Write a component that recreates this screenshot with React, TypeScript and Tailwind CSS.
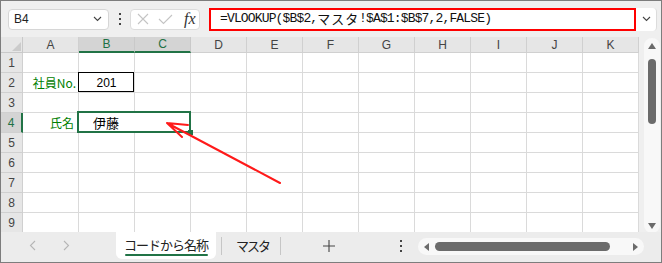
import React from 'react';

const COLS = ['A', 'B', 'C', 'D', 'E', 'F', 'G', 'H', 'I', 'J', 'K'];
const ROWS = [1, 2, 3, 4, 5, 6, 7, 8, 9];
const GREEN = '#217346';

const sans = { fontFamily: '"Liberation Sans", "Noto Sans CJK JP", sans-serif' };
const jp = { fontFamily: '"Noto Sans CJK JP", sans-serif' };

const Chevron = () => (
  <svg width="9" height="6" viewBox="0 0 9 6">
    <path d="M1 1L4.5 4.5L8 1" fill="none" stroke="#444" strokeWidth="1.1" />
  </svg>
);

const Dots = ({ color = '#444' }: { color?: string }) => (
  <div className="flex flex-col items-center gap-[3px]">
    {[0, 1, 2].map((i) => (
      <div key={i} className="w-[2px] h-[2px]" style={{ background: color }} />
    ))}
  </div>
);

// Cell contents keyed by "row-col"
const renderCell = (row: number, col: string) => {
  if (row === 2 && col === 'A')
    return (
      <div className="h-full flex items-center justify-end pr-[2px] text-[12px] text-[#008000]" style={jp}>
        社員No.
      </div>
    );
  if (row === 2 && col === 'B')
    return (
      <div className="relative h-full flex items-center justify-center text-[12px] text-black" style={sans}>
        201
        <div className="absolute -left-px -top-px right-0 bottom-0 border border-black" />
      </div>
    );
  if (row === 4 && col === 'A')
    return (
      <div className="h-full flex items-center justify-end pr-[4px] text-[12px] text-[#008000]" style={jp}>
        氏名
      </div>
    );
  return null;
};

export default function App() {
  return (
    <div
      className="relative w-[662px] h-[263px] border border-[#7d7d7d] bg-[#efefef] flex flex-col overflow-hidden"
      style={sans}
    >
      {/* formula bar */}
      <div className="h-[36px] shrink-0 flex items-center pl-[7px] pr-[4px]">
        <div className="w-[101px] h-[21px] bg-white border border-[#d6d6d6] rounded-[4px] flex items-center justify-between pl-[5px] pr-[6px]">
          <span className="text-[12px] text-[#222]">B4</span>
          <Chevron />
        </div>
        <div className="w-[21px] flex justify-center">
          <Dots />
        </div>
        <div className="w-[70px] h-[21px] bg-white border border-[#dcdcdc] rounded-[4px] flex items-center pl-[6px]">
          <svg width="12" height="12" viewBox="0 0 12 12">
            <path d="M1 1L11 11M11 1L1 11" stroke="#c4c4c4" strokeWidth="1.1" />
          </svg>
          <svg className="ml-[9px]" width="15" height="11" viewBox="0 0 15 11">
            <path d="M1 5L5.5 9.5L14 1" fill="none" stroke="#c4c4c4" strokeWidth="1.1" />
          </svg>
          <span
            className="ml-[11px] text-[16px] italic text-[#333] leading-none"
            style={{ fontFamily: '"Liberation Serif", serif' }}
          >
            fx
          </span>
        </div>
        <div className="ml-[9px] flex-1 h-[23px] flex items-stretch bg-white rounded-r-[4px] border-r border-[#dcdcdc]">
          <div
            className="flex-1 border-2 border-[#ff0000] flex items-center pl-[9px] text-[13px] text-[#111] tracking-[-0.85px]"
            style={{ fontFamily: '"Liberation Mono", "Noto Sans CJK JP", monospace' }}
          >
            =VLOOKUP($B$2,<span className="tracking-[0.9px]" style={jp}>マスタ</span>!$A$1:$B$7,2,FALSE)
          </div>
          <div className="w-[20px] flex items-center justify-center">
            <Chevron />
          </div>
        </div>
      </div>

      {/* sheet */}
      <div className="h-[195px] shrink-0 flex">
        <div className="w-[638px] bg-white overflow-hidden">
          <div className="grid grid-cols-[22px_repeat(11,56px)] text-[12px] text-[#444]">
            <div className="relative h-[16px] bg-[#e6e6e6] border-r border-b border-[#c9c9c9]">
              <svg className="absolute right-[1px] bottom-[1px]" width="9" height="9" viewBox="0 0 9 9">
                <path d="M9 0L9 9L0 9Z" fill="#cbcbcb" />
              </svg>
            </div>
            {COLS.map((c) => {
              const sel = c === 'B' || c === 'C';
              return (
                <div
                  key={c}
                  className={
                    sel
                      ? 'h-[16px] flex items-center justify-center bg-[#d4d4d4] text-[#1e7145] border-r border-[#c9c9c9] border-b-2 border-b-[#217346]'
                      : 'h-[16px] flex items-center justify-center bg-[#e6e6e6] border-r border-b border-[#d0d0d0]'
                  }
                >
                  {c}
                </div>
              );
            })}
            {ROWS.map((r) => (
              <React.Fragment key={r}>
                <div
                  className={
                    r === 4
                      ? 'h-[20px] flex items-center justify-center bg-[#d4d4d4] text-[#1e7145] border-b border-[#d0d0d0] border-r-2 border-r-[#217346]'
                      : 'h-[20px] flex items-center justify-center bg-[#e6e6e6] border-r border-b border-[#d0d0d0]'
                  }
                >
                  {r}
                </div>
                {COLS.map((c) => {
                  if (r === 4 && c === 'C') return null;
                  if (r === 4 && c === 'B')
                    return (
                      <div key={c} className="relative col-span-2 h-[20px] border-r border-b border-[#dadada]">
                        <div className="h-full flex items-center pl-[14px] text-[13px] text-black" style={jp}>
                          伊藤
                        </div>
                        <div className="absolute -left-[2px] -top-[2px] -right-px -bottom-px border-2" style={{ borderColor: GREEN }} />
                        <div className="absolute -right-[3px] -bottom-[3px] w-[5px] h-[5px]" style={{ background: GREEN }} />
                      </div>
                    );
                  return (
                    <div key={c} className="h-[20px] border-r border-b border-[#dadada]">
                      {renderCell(r, c)}
                    </div>
                  );
                })}
              </React.Fragment>
            ))}
          </div>
        </div>
        {/* vertical scrollbar */}
        <div className="ml-[5px] mt-[1px] w-[16px] h-[195px] bg-[#f8f8f8] rounded-full flex flex-col items-center pt-[5px] pb-[4px]">
          <svg width="8" height="6" viewBox="0 0 8 6">
            <path d="M4 0L8 6L0 6Z" fill="#6b6b6b" />
          </svg>
          <div className="mt-[10px] w-[8px] h-[65px] rounded-full bg-[#6b6b6b]" />
          <div className="flex-1" />
          <svg width="8" height="6" viewBox="0 0 8 6">
            <path d="M0 0L8 0L4 6Z" fill="#6b6b6b" />
          </svg>
        </div>
      </div>

      {/* sheet tabs */}
      <div className="h-[30px] shrink-0 flex items-start bg-[#ececec]">
        <div className="w-[115px] h-[27px] flex items-center pl-[28px]">
          <svg width="7" height="11" viewBox="0 0 7 11">
            <path d="M6 1L1.5 5.5L6 10" fill="none" stroke="#b5b5b5" strokeWidth="1.1" />
          </svg>
          <svg className="ml-[27px]" width="7" height="11" viewBox="0 0 7 11">
            <path d="M1 1L5.5 5.5L1 10" fill="none" stroke="#b5b5b5" strokeWidth="1.1" />
          </svg>
        </div>
        <div className="w-[100px] h-[27px] bg-white rounded-b-[6px] flex flex-col items-center pt-[5px]">
          <span className="text-[13px] leading-[16px] text-[#222] tracking-[-1px]" style={jp}>
            コードから名称
          </span>
          <div className="mt-[1px] w-[83px] h-[2px] rounded-full" style={{ background: GREEN }} />
        </div>
        <div className="ml-[5px] mt-[5px] w-px h-[18px] bg-[#c6c6c6]" />
        <div className="ml-[14px] w-[44px] h-[27px] flex items-center">
          <span className="text-[13px] text-[#222] tracking-[-2px]" style={jp}>
            マスタ
          </span>
        </div>
        <div className="mt-[5px] w-px h-[18px] bg-[#c6c6c6]" />
        <div className="w-[95px] h-[27px] flex items-center pl-[42px]">
          <svg width="12" height="12" viewBox="0 0 12 12">
            <path d="M6 0V12M0 6H12" stroke="#444" strokeWidth="1.1" />
          </svg>
        </div>
        <div className="w-[42px] h-[27px] flex items-center pl-[24px]">
          <Dots />
        </div>
        <div className="mt-[6px] w-[226px] h-[17px] bg-[#f8f8f8] rounded-full flex items-center pl-[6px] pr-[6px]">
          <svg width="5" height="8" viewBox="0 0 5 8">
            <path d="M5 0L5 8L0 4Z" fill="#6b6b6b" />
          </svg>
          <div className="ml-[6px] w-[175px] h-[9px] rounded-full bg-[#6b6b6b]" />
          <div className="flex-1" />
          <svg width="5" height="8" viewBox="0 0 5 8">
            <path d="M0 0L5 4L0 8Z" fill="#6b6b6b" />
          </svg>
        </div>
      </div>

      {/* annotation arrow */}
      <svg className="absolute left-0 top-0 pointer-events-none" width="662" height="263" viewBox="-1 -1 662 263">
        <path
          d="M278 181L165 121M165 121L186 123M165 121L180 135"
          fill="none"
          stroke="#ff1a1a"
          strokeWidth="2"
          strokeLinecap="round"
        />
      </svg>
    </div>
  );
}
